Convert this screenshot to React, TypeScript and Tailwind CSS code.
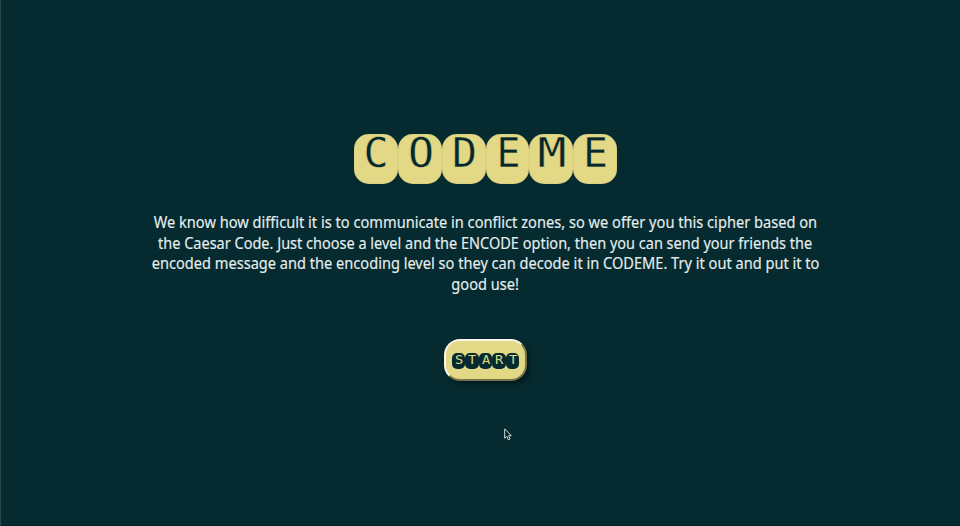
const titleLetters = [
  { letter: "C", look: "" },
  { letter: "O", look: "translate-x-[1.5px] scale-x-[1.04]" },
  { letter: "D", look: "translate-x-[1px]" },
  { letter: "E", look: "translate-x-[1px] scale-x-[0.96]" },
  { letter: "M", look: "translate-x-[0.5px] scale-x-[1.16]" },
  { letter: "E", look: "translate-x-[0.5px]" },
];
const startLetters = ["S", "T", "A", "R", "T"];

function Cursor() {
  return (
    <svg className="absolute left-[503px] top-[428px] h-[13px] w-[8px]" viewBox="0 0 8 13">
      <path
        d="M.7 .9V10.2L2.8 8.3L4.3 11.8L6 11L4.6 7.7H7.2Z"
        fill="#071c22"
        stroke="#d5dfe2"
        strokeWidth="1"
      />
    </svg>
  );
}

export default function App() {
  return (
    <main className="relative flex h-[526px] w-[960px] flex-col items-center overflow-hidden border-b border-l border-b-[#031f22] border-l-[#29474d] bg-[#052b30] pl-[10px] pt-[134px]">
      <h1 className="flex font-['DejaVu_Sans_Mono',monospace] text-[41.5px] leading-[50px] text-[#04292c]">
        {titleLetters.map(({ letter, look }, i) => (
          <span
            key={i}
            className="flex h-[50px] w-[43.8px] justify-center rounded-[15px] bg-[#e2d886] shadow-[inset_0_0_1px_#a9a867]"
          >
            <span className={`-mt-[6px] [-webkit-text-stroke:0.4px_#e2d886] ${look}`}>{letter}</span>
          </span>
        ))}
      </h1>
      <p className="mt-[28px] flex flex-col items-center whitespace-nowrap font-['Noto_Sans',sans-serif] text-[16.5px] leading-[20.7px] text-[#e6eeee] [-webkit-text-stroke:0.15px_#e6eeee]">
        <span className="scale-x-[0.886]">We know how difficult it is to communicate in conflict zones, so we offer you this cipher based on</span>
        <span className="scale-x-[0.879]">the Caesar Code. Just choose a level and the ENCODE option, then you can send your friends the</span>
        <span className="scale-x-[0.884]">encoded message and the encoding level so they can decode it in CODEME. Try it out and put it to</span>
        <span className="scale-x-[0.886]">good use!</span>
      </p>
      <button className="mt-[44px] flex h-[42px] w-[83px] items-center justify-center rounded-[16px] border-2 border-b-[#77744a] border-l-[#f8f7e9] border-r-[#77744a] border-t-[#f8f7e9] bg-[#e2d886] shadow-[3px_3px_4px_#021b1f]">
        <span className="mt-[3px] flex font-['DejaVu_Sans_Mono',monospace] text-[12.5px] leading-[16px] text-[#dfd684]">
          {startLetters.map((letter, i) => (
            <span
              key={i}
              className="flex h-[16px] w-[13.6px] justify-center rounded-[5px] bg-[#052b30]"
            >
              <span className="-mt-[1px] translate-x-[0.5px] scale-x-110">{letter}</span>
            </span>
          ))}
        </span>
      </button>
      <Cursor />
    </main>
  );
}
